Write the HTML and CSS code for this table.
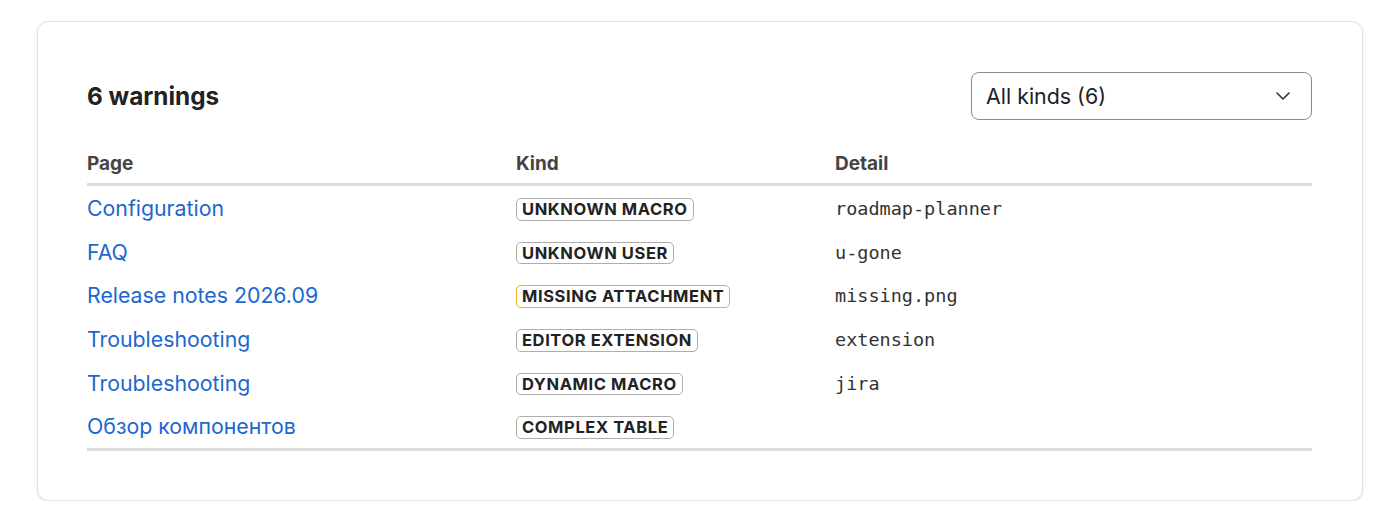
FILE: index.html
```html
<!DOCTYPE html>
<html lang="en">
<head>
<meta charset="utf-8">
<title>Warnings</title>
<link rel="stylesheet" href="styles.css">
</head>
<body>
<div class="page">
  <section class="card">
    <div class="head">
      <h2 class="title">6 warnings</h2>
      <div class="select">
        <span>All kinds (6)</span>
        <svg class="chev" width="14" height="8" viewBox="0 0 14 8"><path d="M1 1l6 6 6-6" fill="none" stroke="#333" stroke-width="1.6" stroke-linecap="round" stroke-linejoin="round"/></svg>
      </div>
    </div>
    <table class="tbl">
      <colgroup><col class="c1"><col class="c2"><col class="c3"></colgroup>
      <thead>
        <tr><th>Page</th><th>Kind</th><th>Detail</th></tr>
      </thead>
      <tbody>
        <tr><td><a href="#">Configuration</a></td><td><span class="badge">Unknown macro</span></td><td class="mono">roadmap-planner</td></tr>
        <tr><td><a href="#">FAQ</a></td><td><span class="badge">Unknown user</span></td><td class="mono">u-gone</td></tr>
        <tr><td><a href="#">Release notes 2026.09</a></td><td><span class="badge warn">Missing attachment</span></td><td class="mono">missing.png</td></tr>
        <tr><td><a href="#">Troubleshooting</a></td><td><span class="badge">Editor extension</span></td><td class="mono">extension</td></tr>
        <tr><td><a href="#">Troubleshooting</a></td><td><span class="badge">Dynamic macro</span></td><td class="mono">jira</td></tr>
        <tr><td><a href="#">Обзор компонентов</a></td><td><span class="badge">Complex table</span></td><td class="mono"></td></tr>
      </tbody>
    </table>
  </section>
</div>
</body>
</html>
```
FILE: styles.css
```css
* { box-sizing: border-box; }
body {
  margin: 0;
  background: #fff;
  font-family: Inter, "Liberation Sans", "Noto Sans", sans-serif;
  color: #222;
}
.page {
  padding: 21px 37px 0 37px;
}
.card {
  border: 1px solid #e3e3e3;
  border-radius: 12px;
  box-shadow: 0 1px 3px rgba(0,0,0,0.12);
  padding: 50px 50px 49px 49px;
  background: #fff;
}
.head {
  display: flex;
  align-items: center;
  justify-content: space-between;
  height: 48px;
}
.title {
  margin: 0;
  font-size: 24.3px;
  font-weight: 700;
  color: #222;
}
.select {
  width: 341px;
  height: 48px;
  border: 1px solid #8a8a8a;
  border-radius: 8px;
  display: flex;
  align-items: center;
  justify-content: space-between;
  padding: 0 21px 0 14px;
  font-size: 21.4px;
  color: #222;
}
.tbl {
  width: 100%;
  border-collapse: collapse;
  margin-top: 25px;
  border-bottom: 3px solid #dcdcdc;
}
.c1 { width: 429px; }
.c2 { width: 319px; }
th {
  text-align: left;
  font-size: 19px;
  font-weight: 700;
  color: #444;
  padding: 8px 0 8px 0;
  line-height: 22px;
  border-bottom: 3px solid #dcdcdc;
}
td {
  padding: 11px 0 9px 0;
  line-height: 23.67px;
  font-size: 21.3px;
  vertical-align: top;
}
td a {
  color: #1d67cf;
  text-decoration: none;
}
.badge {
  display: inline-block;
  vertical-align: top;
  margin-top: 1px;
  text-transform: uppercase;
  font-size: 16.5px;
  font-weight: 700;
  letter-spacing: 0.6px;
  line-height: 18.5px;
  padding: 1px 5px;
  border: 1.5px solid #adadad;
  border-radius: 5px;
  color: #222;
}
.badge.warn { border-color: #efb321; }
.mono {
  font-family: "DejaVu Sans Mono", "Liberation Mono", monospace;
  font-size: 18.5px;
  color: #333;
}
```
